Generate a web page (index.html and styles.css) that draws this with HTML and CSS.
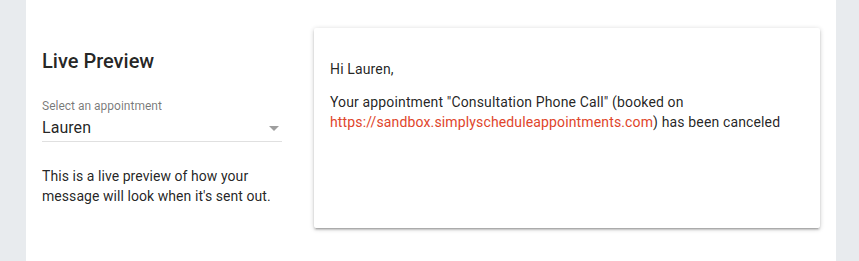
FILE: index.html
```html
<!DOCTYPE html>
<html>
<head>
<meta charset="utf-8">
<link rel="stylesheet" href="styles.css">
</head>
<body>
<div class="panel">
  <div class="layout">
    <div class="side">
      <h2 class="title">Live Preview</h2>
      <div class="field">
        <div class="field-label">Select an appointment</div>
        <div class="select">
          <span class="select-value">Lauren</span>
          <span class="arrow"></span>
        </div>
      </div>
      <p class="hint">This is a live preview of how your message will look when it's sent out.</p>
    </div>
    <div class="card">
      <p class="msg">Hi Lauren,</p>
      <p class="msg">Your appointment "Consultation Phone Call" (booked on <a class="link" href="#">https://sandbox.simplyscheduleappointments.com</a>) has been canceled</p>
    </div>
  </div>
</div>
</body>
</html>
```

FILE: styles.css
```css
html, body {
  margin: 0;
  padding: 0;
}
body {
  background: #e8ebee;
  font-family: Roboto, "Noto Sans", sans-serif;
  color: rgba(0, 0, 0, 0.87);
  height: 261px;
  overflow: hidden;
}
.panel {
  margin-left: 26px;
  width: 810px;
  height: 261px;
  background: #ffffff;
  box-sizing: border-box;
  padding: 28px 16px 0 16px;
}
.layout {
  display: flex;
  gap: 32px;
  align-items: flex-start;
}
.side {
  width: 240px;
  flex: none;
}
.title {
  margin: 21px 0 0 0;
  font-size: 20px;
  font-weight: 500;
  line-height: 24px;
  color: rgba(0, 0, 0, 0.87);
}
.field {
  margin-top: 26px;
}
.field-label {
  font-size: 12px;
  line-height: 14px;
  color: rgba(0, 0, 0, 0.54);
}
.select {
  display: flex;
  align-items: center;
  justify-content: space-between;
  height: 26px;
  padding-top: 2px;
  border-bottom: 1px solid rgba(0, 0, 0, 0.12);
  padding-right: 3px;
}
.select-value {
  font-size: 16px;
  line-height: 20px;
  letter-spacing: 0.05px;
}
.arrow {
  width: 0;
  height: 0;
  border-left: 5px solid transparent;
  border-right: 5px solid transparent;
  border-top: 5px solid rgba(0, 0, 0, 0.38);
}
.hint {
  margin: 24px 0 0 0;
  font-size: 14px;
  line-height: 20px;
  letter-spacing: 0.06px;
}
.card {
  width: 506px;
  height: 200px;
  flex: none;
  box-sizing: border-box;
  background: #ffffff;
  padding: 31px 16px 16px 16px;
  box-shadow: 0 2px 2px 0 rgba(0,0,0,0.14), 0 3px 1px -2px rgba(0,0,0,0.12), 0 1px 5px 0 rgba(0,0,0,0.2);
  border-radius: 2px;
}
.msg {
  margin: 0 0 13px 0;
  font-size: 14px;
  line-height: 20px;
  letter-spacing: 0.14px;
}
.link {
  color: #e0452b;
  text-decoration: none;
}
```
